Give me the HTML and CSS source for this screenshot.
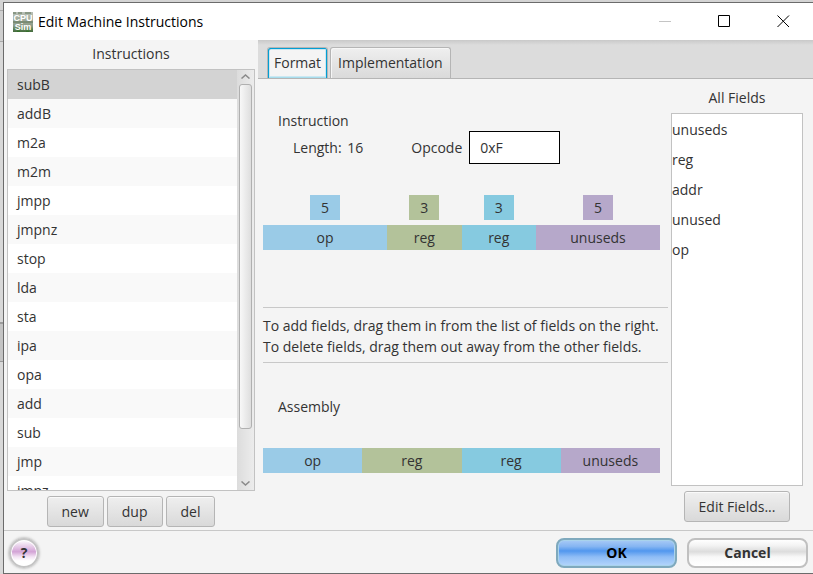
FILE: index.html
```html
<!DOCTYPE html>
<html lang="en">
<head>
<meta charset="utf-8">
<title>Edit Machine Instructions</title>
<link rel="stylesheet" href="styles.css">
</head>
<body>
<div class="window">
  <header class="titlebar">
    <svg class="app-icon" viewBox="0 0 20 20" aria-hidden="true">
      <defs>
        <linearGradient id="chip" x1="0" y1="0" x2="0" y2="1">
          <stop offset="0" stop-color="#b9c0b7"/>
          <stop offset="0.7" stop-color="#8b9a86"/>
          <stop offset="1" stop-color="#2f6b25"/>
        </linearGradient>
      </defs>
      <rect width="20" height="20" fill="url(#chip)"/>
      <path d="M0 1h3M5 1h4M12 1h6M0 10h20M0 19h4M7 19h6M16 19h4" stroke="#5d7357"/>
      <text x="10" y="9" class="icon-text">CPU</text>
      <text x="10" y="18" class="icon-text">Sim</text>
    </svg>
    <h1 class="title">Edit Machine Instructions</h1>
    <div class="window-controls">
      <button class="win-btn" aria-label="Minimize" disabled><svg viewBox="0 0 13 13"><path d="M0 6.500h12" stroke="#c4c4c4"/></svg></button>
      <button class="win-btn" aria-label="Maximize"><svg viewBox="0 0 13 13"><path d="M.5.5h11v11H.5z" fill="none" stroke="#000"/></svg></button>
      <button class="win-btn" aria-label="Close"><svg viewBox="0 0 13 13"><path d="M.5.5l11.500 11.500M12 .5L.5 12" stroke="#000"/></svg></button>
    </div>
  </header>

  <main class="content">
    <section class="instructions">
      <h2 class="list-title">Instructions</h2>
      <div class="list-box">
        <ul class="instruction-list">
          <li class="selected">subB</li>
          <li>addB</li>
          <li>m2a</li>
          <li>m2m</li>
          <li>jmpp</li>
          <li>jmpnz</li>
          <li>stop</li>
          <li>lda</li>
          <li>sta</li>
          <li>ipa</li>
          <li>opa</li>
          <li>add</li>
          <li>sub</li>
          <li>jmp</li>
          <li>jmpz</li>
        </ul>
        <div class="scrollbar">
          <svg class="arrow" viewBox="0 0 9 5"><path d="M.5 4.500l4-3.500 4 3.500"/></svg>
          <div class="track"><div class="thumb"></div></div>
          <svg class="arrow" viewBox="0 0 9 5"><path d="M.5.5l4 3.500 4-3.500"/></svg>
        </div>
      </div>
      <div class="list-actions">
        <button class="btn">new</button>
        <button class="btn">dup</button>
        <button class="btn">del</button>
      </div>
    </section>

    <section class="tab-pane">
      <div class="tabs" role="tablist">
        <button class="tab active" role="tab" aria-selected="true">Format</button>
        <button class="tab" role="tab" aria-selected="false">Implementation</button>
      </div>
      <div class="tab-content">
        <div class="format">
          <div class="instruction-part">
            <h3 class="part-title">Instruction</h3>
            <div class="properties">
              <span class="length">Length: <span>16</span></span>
              <label for="opcode">Opcode</label>
              <input id="opcode" class="opcode" type="text" value="0xF">
            </div>
            <div class="layout">
              <div class="cell wide"><span class="bits blue">5</span><span class="field blue">op</span></div>
              <div class="cell"><span class="bits green">3</span><span class="field green">reg</span></div>
              <div class="cell"><span class="bits cyan">3</span><span class="field cyan">reg</span></div>
              <div class="cell wide"><span class="bits purple">5</span><span class="field purple">unuseds</span></div>
            </div>
          </div>
          <p class="hint">To add fields, drag them in from the list of fields on the right.<br>To delete fields, drag them out away from the other fields.</p>
          <div class="assembly-part">
            <h3 class="part-title">Assembly</h3>
            <div class="assembly">
              <span class="field blue">op</span>
              <span class="field green">reg</span>
              <span class="field cyan">reg</span>
              <span class="field purple">unuseds</span>
            </div>
          </div>
        </div>
        <div class="all-fields">
          <h3 class="fields-title">All Fields</h3>
          <ul class="fields-list">
            <li>unuseds</li>
            <li>reg</li>
            <li>addr</li>
            <li>unused</li>
            <li>op</li>
          </ul>
          <button class="btn">Edit Fields...</button>
        </div>
      </div>
    </section>
  </main>

  <footer class="footer">
    <button class="help" aria-label="Help">?</button>
    <button class="pill ok">OK</button>
    <button class="pill">Cancel</button>
  </footer>
</div>
</body>
</html>
```
FILE: styles.css
```css
* {
  box-sizing: border-box;
}

body {
  margin: 0;
  height: 100vh;
  padding: 2px 0 0 3px;
  background: linear-gradient(#d4d4d4 0 10px, #ababab 10px 11px, #d0d0d0 11px 41px, #a8a8a8 41px 42px, #d8d8d8 42px 322px, #9c9c9c 322px 324px, #c4c4c4 324px 361px, #999 361px 362px, #d8d8d8 362px);
  font: 14px/20px "Open Sans", "Noto Sans", sans-serif;
  color: #333;
  overflow: hidden;
}

h1, h2, h3, p, ul {
  margin: 0;
  padding: 0;
  font-size: inherit;
  font-weight: 400;
}

ul {
  list-style: none;
}

button, input {
  font: inherit;
  color: inherit;
}

.window {
  display: flex;
  flex-direction: column;
  height: 100%;
  border: 1px solid #6b6b6b;
  border-right: 0;
  background: #f4f4f4;
}

.titlebar {
  display: flex;
  align-items: center;
  height: 37px;
  padding-left: 9px;
  background: #fff;
  color: #000;
}

.app-icon {
  width: 20px;
  height: 20px;
}

.icon-text {
  font: 700 9px "Liberation Sans", sans-serif;
  fill: #fff;
  text-anchor: middle;
}

.title {
  margin-left: 5px;
}

.window-controls {
  display: flex;
  margin-left: auto;
}

.win-btn {
  display: flex;
  align-items: center;
  justify-content: center;
  width: 59px;
  height: 37px;
  padding: 0;
  border: 0;
  background: none;
}

.win-btn svg {
  width: 13px;
  height: 13px;
}

.content {
  display: flex;
  flex: 1;
  min-height: 0;
}

.instructions {
  display: flex;
  flex-direction: column;
  width: 254px;
  padding: 4px 3px 3px;
}

.list-title {
  padding-bottom: 5px;
  text-align: center;
}

.list-box {
  display: flex;
  flex: 1;
  min-height: 0;
  border: 1px solid #c2c2c2;
  background: #fff;
  overflow: hidden;
}

.instruction-list {
  flex: 1;
}

.instruction-list li {
  height: 29px;
  padding-left: 9px;
  line-height: 29px;
}

.instruction-list li:nth-child(even) {
  background: #f9f9f9;
}

.instruction-list .selected {
  background: #d3d3d3;
}

.scrollbar {
  display: flex;
  flex-direction: column;
  align-items: center;
  width: 17px;
  padding: 4px 0;
  background: linear-gradient(90deg, #dcdcdc, #ececec);
}

.arrow {
  width: 9px;
  height: 5px;
  fill: none;
  stroke: #8a8a8a;
  stroke-width: 1.5px;
}

.track {
  flex: 1;
  align-self: stretch;
  padding: 5px 2px;
}

.thumb {
  height: 88%;
  border: 1px solid #b0b0b0;
  border-radius: 3px;
  background: linear-gradient(90deg, #f8f8f8, #dedede);
}

.list-actions {
  display: flex;
  justify-content: center;
  gap: 3px;
  padding-top: 5px;
}

.btn {
  height: 31px;
  padding: 0 14px;
  border: 1px solid #b5b5b5;
  border-radius: 3px;
  background: linear-gradient(#efefef, #d9d9d9);
  box-shadow: inset 0 1px #fafafa;
}

.tab-pane {
  display: flex;
  flex: 1;
  flex-direction: column;
}

.tabs {
  display: flex;
  align-items: flex-end;
  gap: 2px;
  height: 39px;
  padding-left: 9px;
  border-bottom: 1px solid #b5b5b5;
  background: linear-gradient(#c9c9c9, #dcdcdc 5px);
}

.tab {
  height: 31px;
  padding: 0 7px;
  border: 1px solid #b5b5b5;
  border-bottom: 0;
  border-radius: 3px 3px 0 0;
  background: linear-gradient(#efefef, #dadada);
  box-shadow: inset 1px 1px #f6f6f6;
}

.tab.active {
  padding: 0 6px;
  border-color: #b5b5b5;
  background: #f4f4f4;
  box-shadow: inset 1px 1px #039ed3, inset -1px 0 #039ed3, inset 0 -1px #a8ddec, inset 0 0 0 2px #cbe8f2;
}

.tab-content {
  display: flex;
  flex: 1;
  gap: 3px;
  min-height: 0;
  padding: 9px 10px 8px 5px;
}

.format {
  flex: 1;
}

.instruction-part {
  height: 220px;
  padding: 23px 8px 0 0;
  border-bottom: 1px solid #c8c8c8;
}

.part-title {
  padding-left: 15px;
}

.properties {
  display: flex;
  align-items: center;
  padding-left: 30px;
}

.length {
  margin-right: 48px;
}

.length span {
  margin-left: 2px;
}

.opcode {
  width: 91px;
  height: 33px;
  margin-left: 7px;
  padding: 0 10px;
  border: 1px solid #000;
  background: #fff;
}

.layout {
  display: flex;
  padding-top: 31px;
}

.cell {
  display: flex;
  flex: 3;
  flex-direction: column;
  align-items: center;
  gap: 5px;
}

.cell.wide {
  flex: 5;
}

.bits, .field {
  height: 25px;
  line-height: 25px;
  text-align: center;
}

.bits {
  width: 30px;
}

.cell .field {
  width: 100%;
}

.blue {
  background: #9acbe7;
}

.green {
  background: #b3c29a;
}

.cyan {
  background: #86cae0;
}

.purple {
  background: #b6a8ca;
}

.hint {
  padding: 7px 0 5px;
  border-bottom: 1px solid #c8c8c8;
  line-height: 21px;
  white-space: nowrap;
}

.assembly-part {
  padding: 34px 8px 0 0;
}

.assembly {
  display: flex;
  padding-top: 31px;
}

.assembly .field {
  flex: 1;
}

.all-fields {
  display: flex;
  flex-direction: column;
  align-items: center;
  gap: 5px;
  width: 132px;
}

.fields-list {
  flex: 1;
  align-self: stretch;
  border: 1px solid #c2c2c2;
  background: #fff;
}

.fields-list li {
  height: 30px;
  line-height: 32px;
}

.footer {
  display: flex;
  align-items: center;
  gap: 10px;
  height: 43px;
  padding: 2px 5px 0;
  border-top: 1px solid #c8c8c8;
}

.help {
  width: 30px;
  height: 30px;
  margin-right: auto;
  padding: 0;
  border: 2px solid #c4c4c4;
  border-radius: 50%;
  background: linear-gradient(#fff, #d3a3d6 45%, #f3e4f4 65%, #fff 80%);
  box-shadow: inset 0 0 0 1px #fff, 0 0 3px #999;
  font-weight: 700;
}

.pill {
  width: 121px;
  height: 30px;
  padding: 0;
  border: 2px solid #c0c0c0;
  border-radius: 8px;
  background: linear-gradient(#fff, #f4f4f4 20%, #dcdcdc 45%, #f8f8f8 65%, #fff);
  font-weight: 700;
}

.pill.ok {
  border-color: #7fa9bd;
  background: linear-gradient(#a9cbf6, #85b5f2 25%, #5197ee 42%, #8fbdf6 65%, #b4d5fb);
  box-shadow: inset 0 0 0 1px #a9d3ec;
  color: #000;
}
```
